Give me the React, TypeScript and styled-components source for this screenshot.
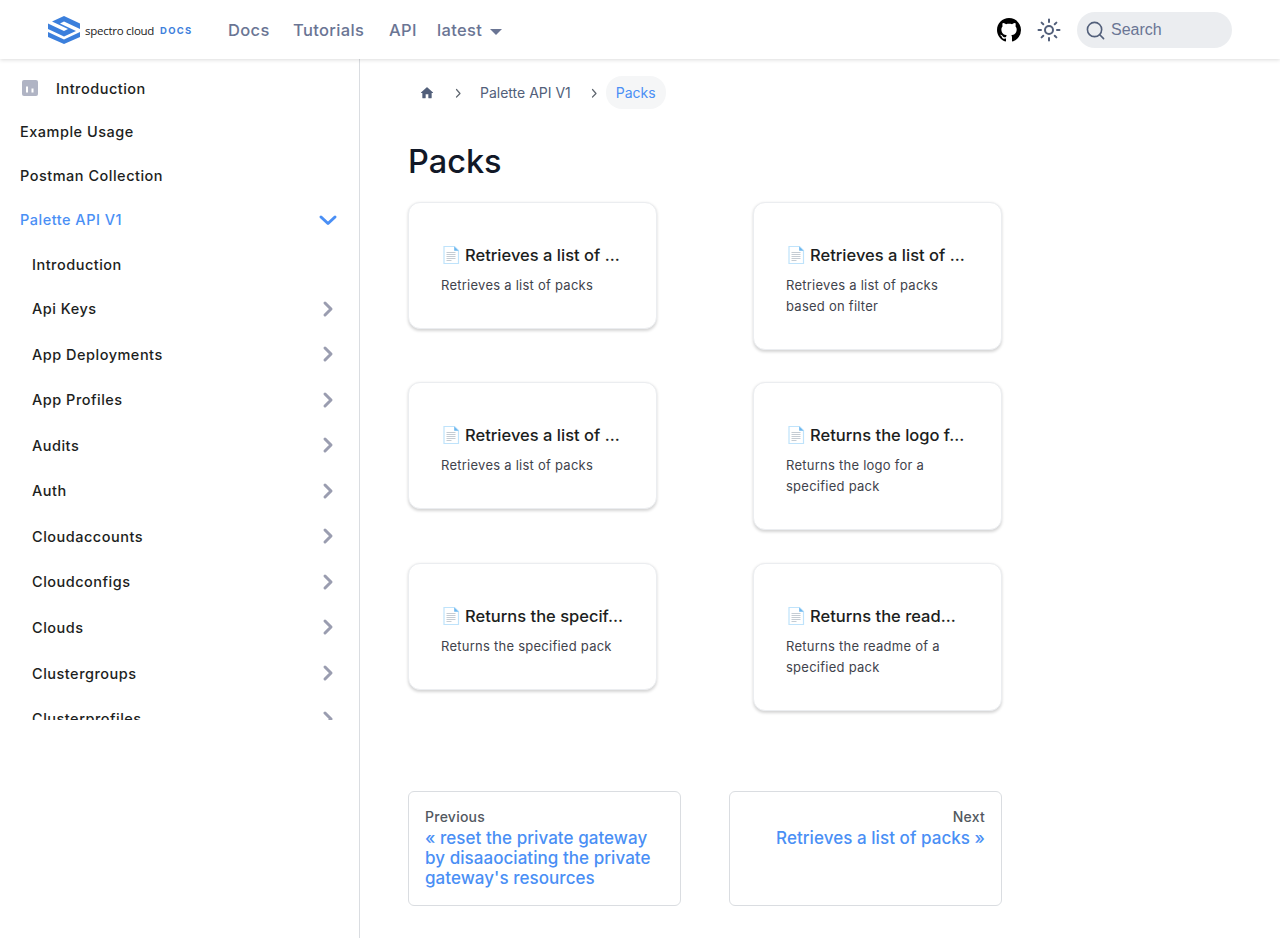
import React from "react";
import styled, { createGlobalStyle } from "styled-components";

const Global = createGlobalStyle`
  html, body { margin: 0; padding: 0; background: #fff; }
  body { font-family: Inter, "Open Sans", sans-serif; color: #111827; overflow: hidden; }
  * { box-sizing: border-box; }
`;

const Page = styled.div`
  width: 1280px;
  height: 938px;
  display: flex;
  flex-direction: column;
  overflow: hidden;
`;

const Header = styled.header`
  height: 59px;
  flex: none;
  display: flex;
  align-items: center;
  padding: 1px 48px 0;
  background: #fff;
  box-shadow: 0 1px 4px rgba(0, 0, 0, 0.14);
  position: relative;
  z-index: 2;
`;

const Brand = styled.div`
  display: flex;
  align-items: center;
  width: 180px;
  flex: none;
`;

const BrandName = styled.span`
  font-family: "Open Sans", sans-serif;
  font-size: 11.5px;
  letter-spacing: -0.27px;
  color: #222;
  margin-left: 5px;
`;

const BrandTag = styled.span`
  font-family: Inter, sans-serif;
  font-size: 9.5px;
  font-weight: 700;
  letter-spacing: 1.2px;
  color: #3e7fdc;
  margin-left: 6px;
`;

const Nav = styled.nav`
  display: flex;
  align-items: center;
  gap: 24px;
`;

const NavLink = styled.a<{ $w?: number }>`
  font-size: 16.5px;
  font-weight: 500;
  letter-spacing: 0.35px;
  color: #6a7594;
  display: flex;
  align-items: center;
  width: ${(p) => (p.$w ? `${p.$w}px` : "auto")};
`;

const Caret = styled.span`
  width: 0;
  height: 0;
  margin-left: 8px;
  margin-top: 3px;
  border-left: 6px solid transparent;
  border-right: 6px solid transparent;
  border-top: 6px solid #6a7594;
`;

const HeaderRight = styled.div`
  margin-left: auto;
  display: flex;
  align-items: center;
`;

const IconSlot = styled.span`
  display: flex;
  margin-right: 16px;
`;

const SearchBox = styled.div`
  width: 155px;
  height: 36px;
  border-radius: 18px;
  background: #ebedf0;
  display: flex;
  align-items: center;
  padding-left: 9px;
  gap: 6px;
  font-family: "Liberation Sans", sans-serif;
  font-size: 16px;
  color: #6a7594;
`;

const Body = styled.div`
  flex: 1;
  display: flex;
  min-height: 0;
`;

const Sidebar = styled.aside`
  width: 360px;
  flex: none;
  border-right: 1px solid #dadde1;
  padding-top: 7px;
`;

const Menu = styled.div`
  height: 654px;
  overflow: hidden;
`;

const Row = styled.div<{ $h: number; $indent?: boolean; $active?: boolean }>`
  height: ${(p) => p.$h}px;
  display: flex;
  align-items: center;
  padding: 0 22px 0 ${(p) => (p.$indent ? 32 : 20)}px;
  font-size: 14.5px;
  font-weight: 500;
  letter-spacing: 0.5px;
  color: ${(p) => (p.$active ? "#4a8ff5" : "#1c1e21")};
  justify-content: space-between;
`;

const RowLabel = styled.span`
  display: flex;
  align-items: center;
`;

const IntroIcon = styled.svg`
  margin-right: 18px;
  margin-left: 2px;
`;

const Main = styled.main`
  flex: 1;
  padding: 17px 0 0 48px;
  min-width: 0;
`;

const Column = styled.div`
  width: 594px;
`;

const Crumbs = styled.div`
  display: flex;
  align-items: center;
  height: 33px;
  font-size: 14px;
  color: #525f7a;
`;

const HomeLink = styled.span`
  display: flex;
  padding: 0 10px 0 11px;
`;

const CrumbSep = styled.span`
  display: flex;
  margin: 0 7px 0 8px;
`;

const CrumbItem = styled.span`
  padding: 0 10px;
`;

const CrumbActive = styled.span`
  height: 33px;
  padding: 0 10px;
  display: flex;
  align-items: center;
  border-radius: 16px;
  background: #f5f6f7;
  color: #4a8ff5;
`;

const Title = styled.h1`
  margin: 32px 0 18.7px;
  font-size: 32.5px;
  line-height: 42px;
  font-weight: 500;
  color: #111827;
`;

const Cards = styled.div`
  display: grid;
  grid-template-columns: 249px 249px;
  column-gap: 96px;
  row-gap: 32.5px;
  align-items: start;
`;

const Card = styled.a`
  display: block;
  width: 249px;
  padding: 33px 32px 32px;
  border: 1px solid #ebedf0;
  border-radius: 12px;
  background: #fff;
  box-shadow: 0 1.5px 3px rgba(0, 0, 0, 0.17);
`;

const CardTitle = styled.div`
  display: flex;
  align-items: center;
  height: 38px;
  font-size: 16.5px;
  font-weight: 500;
  color: #1c1e21;
`;

const CardTitleText = styled.span`
  white-space: nowrap;
  margin-left: 4px;
`;

const CardDesc = styled.p`
  margin: 1px 0 0;
  font-size: 13px;
  line-height: 21px;
  letter-spacing: 0.25px;
  color: #3f434c;
`;

const Pager = styled.div`
  display: grid;
  grid-template-columns: 273px 273px;
  column-gap: 48px;
  margin-top: 80px;
`;

const PagerCard = styled.a<{ $next?: boolean }>`
  display: block;
  height: 115px;
  padding: 15px 16px 16px;
  border: 1px solid #dadde1;
  border-radius: 6px;
  text-align: ${(p) => (p.$next ? "right" : "left")};
`;

const PagerSub = styled.div`
  font-size: 14px;
  font-weight: 500;
  line-height: 19px;
  letter-spacing: 0.25px;
  margin-bottom: 2px;
  color: #525860;
`;

const PagerLabel = styled.div`
  font-size: 17px;
  font-weight: 500;
  line-height: 20px;
  letter-spacing: 0.05px;
  color: #4a8ff5;
`;

const Logo = () => (
  <svg width="32" height="28" viewBox="0 0 32 28">
    <path fill="#3b7fdc" d="M16 0 32 7.5 32 13 16 5.5 12 7.5 28 15 16 20.5 0 13 0 7.5 16 15 20 13 4 5.5Z" />
    <path fill="#3b7fdc" d="M0 16 16 23.5 32 16 32 21 16 28 0 21Z" />
  </svg>
);

const GitHub = () => (
  <svg width="24" height="24" viewBox="0 0 16 16" fill="#000">
    <path d="M8 0C3.58 0 0 3.58 0 8c0 3.54 2.29 6.53 5.47 7.59.4.07.55-.17.55-.38 0-.19-.01-.82-.01-1.49-2.01.37-2.53-.49-2.69-.94-.09-.23-.48-.94-.82-1.13-.28-.15-.68-.52-.01-.53.63-.01 1.08.58 1.23.82.72 1.21 1.87.87 2.33.66.07-.52.28-.87.51-1.07-1.78-.2-3.64-.89-3.64-3.95 0-.87.31-1.59.82-2.15-.08-.2-.36-1.02.08-2.12 0 0 .67-.21 2.2.82.64-.18 1.32-.27 2-.27s1.36.09 2 .27c1.53-1.04 2.2-.82 2.2-.82.44 1.1.16 1.92.08 2.12.51.56.82 1.27.82 2.15 0 3.07-1.87 3.75-3.65 3.95.29.25.54.73.54 1.48 0 1.07-.01 1.93-.01 2.2 0 .21.15.46.55.38A8.01 8.01 0 0 0 16 8c0-4.42-3.58-8-8-8z" />
  </svg>
);

const Sun = () => (
  <svg width="24" height="24" viewBox="0 0 24 24" fill="none" stroke="#525f7a" strokeWidth="2" strokeLinecap="round">
    <circle cx="12" cy="12" r="4" />
    <path d="M12 1.5v2.5M12 20v2.5M1.5 12H4M20 12h2.5M4.6 4.6l1.7 1.7M17.7 17.7l1.7 1.7M4.6 19.4l1.7-1.7M17.7 6.3l1.7-1.7" />
  </svg>
);

const SearchIcon = () => (
  <svg width="19" height="19" viewBox="0 0 20 20" fill="none" stroke="#525f7a" strokeWidth="1.7" strokeLinecap="round">
    <circle cx="9" cy="9" r="7.5" />
    <path d="m14.5 14.5 4 4" />
  </svg>
);

const Doc = () => (
  <svg width="20" height="20" viewBox="0 0 20 20" style={{ flex: "none" }}>
    <path d="M3 1.5h10.5L17.5 5.5V18.5H3Z" fill="#fff" stroke="#bfe3fb" strokeWidth="1.2" />
    <path d="M13.2 1.5V5.8H17.5Z" fill="#6db7ee" />
    <path d="M5.5 7.5h9M5.5 9.5h9M5.5 11.5h9M5.5 13.5h9M5.5 15.5h5" stroke="#c5ccd3" strokeWidth="1" />
  </svg>
);

const Chevron = ({ down, color }: { down?: boolean; color: string }) => (
  <svg width="24" height="24" viewBox="0 0 24 24" fill="none" stroke={color} strokeWidth="3" strokeLinecap="round" strokeLinejoin="round" style={{ flex: "none", marginRight: -3 }}>
    {down ? <path d="M5 9l7 6.5L19 9" /> : <path d="M9 6l6 6-6 6" />}
  </svg>
);

const Home = () => (
  <svg width="16" height="16" viewBox="0 0 24 24" fill="#525f7a">
    <path d="M10 19v-5h4v5c0 .55.45 1 1 1h3c.55 0 1-.45 1-1v-7h1.7c.46 0 .68-.57.33-.87L12.67 3.6c-.38-.34-.96-.34-1.34 0l-8.36 7.53c-.34.3-.13.87.33.87H5v7c0 .55.45 1 1 1h3c.55 0 1-.45 1-1z" />
  </svg>
);

const Sep = () => (
  <CrumbSep>
    <svg width="10" height="10" viewBox="0 0 10 10" fill="none" stroke="#606770" strokeWidth="1.2" strokeLinecap="round" strokeLinejoin="round">
      <path d="M3.5 1.5 7 5.5 3.5 9" />
    </svg>
  </CrumbSep>
);

const groups = [
  "Api Keys",
  "App Deployments",
  "App Profiles",
  "Audits",
  "Auth",
  "Cloudaccounts",
  "Cloudconfigs",
  "Clouds",
  "Clustergroups",
  "Clusterprofiles",
];

const cards = [
  ["Retrieves a list of …", "Retrieves a list of packs"],
  ["Retrieves a list of …", "Retrieves a list of packs based on filter"],
  ["Retrieves a list of …", "Retrieves a list of packs"],
  ["Returns the logo f…", "Returns the logo for a specified pack"],
  ["Returns the specif…", "Returns the specified pack"],
  ["Returns the read…", "Returns the readme of a specified pack"],
];

export default function App() {
  return (
    <Page>
      <Global />
      <Header>
        <Brand>
          <Logo />
          <BrandName>spectro cloud</BrandName>
          <BrandTag>DOCS</BrandTag>
        </Brand>
        <Nav>
          <NavLink $w={41}>Docs</NavLink>
          <NavLink $w={72}>Tutorials</NavLink>
          <NavLink $w={24}>API</NavLink>
          <NavLink>
            latest
            <Caret />
          </NavLink>
        </Nav>
        <HeaderRight>
          <IconSlot>
            <GitHub />
          </IconSlot>
          <IconSlot>
            <Sun />
          </IconSlot>
          <SearchBox>
            <SearchIcon />
            Search
          </SearchBox>
        </HeaderRight>
      </Header>
      <Body>
        <Sidebar>
          <Menu>
            <Row $h={44.2}>
              <RowLabel>
                <IntroIcon width="16" height="16" viewBox="0 0 16 16">
                  <rect width="16" height="16" rx="2" fill="#b0b4c4" />
                  <path d="M5 6.5v6M10.5 8.5v4" stroke="#fff" strokeWidth="2" />
                </IntroIcon>
                Introduction
              </RowLabel>
            </Row>
            <Row $h={43}>Example Usage</Row>
            <Row $h={43.8}>Postman Collection</Row>
            <Row $h={46} $active>
              Palette API V1
              <Chevron down color="#4a8ff5" />
            </Row>
            <Row $h={42.9} $indent>
              Introduction
            </Row>
            {groups.map((name) => (
              <Row key={name} $h={45.55} $indent>
                {name}
                <Chevron color="#9a9db0" />
              </Row>
            ))}
          </Menu>
        </Sidebar>
        <Main>
          <Column>
            <Crumbs>
              <HomeLink>
                <Home />
              </HomeLink>
              <Sep />
              <CrumbItem>Palette API V1</CrumbItem>
              <Sep />
              <CrumbActive>Packs</CrumbActive>
            </Crumbs>
            <Title>Packs</Title>
            <Cards>
              {cards.map(([t, d], i) => (
                <Card key={i}>
                  <CardTitle>
                    <Doc />
                    <CardTitleText>{t}</CardTitleText>
                  </CardTitle>
                  <CardDesc>{d}</CardDesc>
                </Card>
              ))}
            </Cards>
            <Pager>
              <PagerCard>
                <PagerSub>Previous</PagerSub>
                <PagerLabel>« reset the private gateway by disaaociating the private gateway's resources</PagerLabel>
              </PagerCard>
              <PagerCard $next>
                <PagerSub>Next</PagerSub>
                <PagerLabel>Retrieves a list of packs »</PagerLabel>
              </PagerCard>
            </Pager>
          </Column>
        </Main>
      </Body>
    </Page>
  );
}
